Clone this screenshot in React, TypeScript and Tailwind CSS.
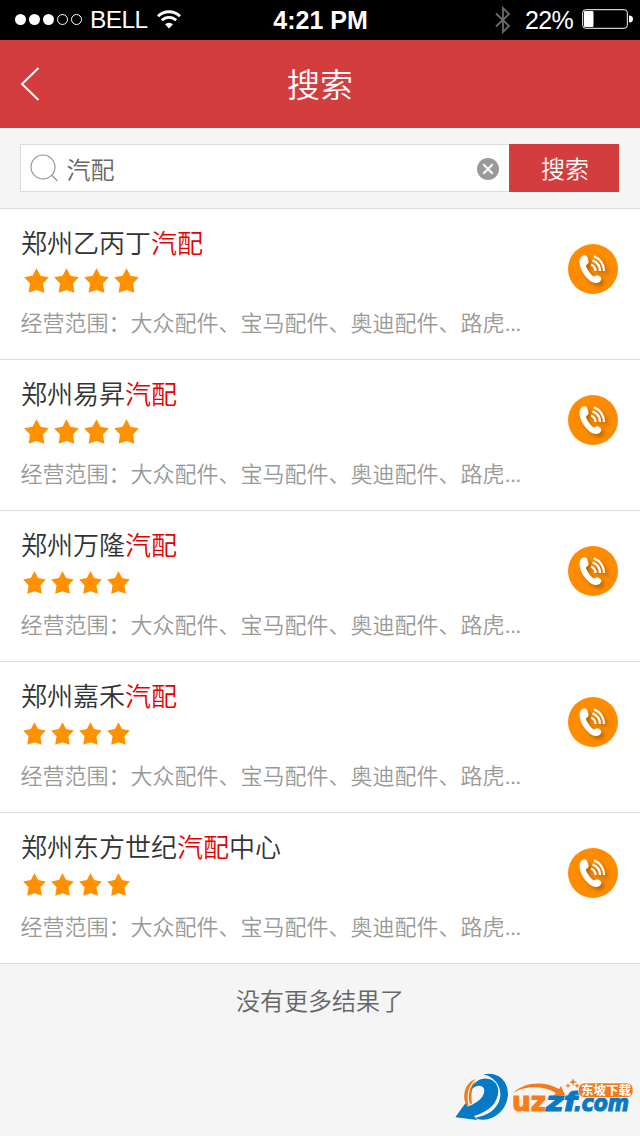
import { clsx } from 'clsx'

const KEYWORD = '汽配'

const SHOPS = [
  { name: '郑州乙丙丁汽配', size: 'lg' },
  { name: '郑州易昇汽配', size: 'lg' },
  { name: '郑州万隆汽配', size: 'sm' },
  { name: '郑州嘉禾汽配', size: 'sm' },
  { name: '郑州东方世纪汽配中心', size: 'sm' },
]

const SCOPE = '经营范围：大众配件、宝马配件、奥迪配件、路虎'

function StatusBar() {
  return (
    <div className="grid h-10 grid-cols-3 items-center bg-black pl-[15px] pr-[7px] font-['Liberation_Sans'] text-white">
      <div className="flex items-center">
        <svg width="68" height="12" viewBox="0 0 68 12">
          {[0, 1, 2].map(i => (
            <circle key={i} cx={5.5 + i * 14} cy="5.5" r="5.5" fill="#fff" />
          ))}
          {[3, 4].map(i => (
            <circle key={i} cx={5.5 + i * 14} cy="5.5" r="5" fill="none" stroke="#fff" />
          ))}
        </svg>
        <span className="ml-[7px] text-[24.5px] leading-10 tracking-[-0.6px]">BELL</span>
        <svg className="mb-[2px] ml-[9px]" width="24" height="19" viewBox="0 0 24 19" fill="none" stroke="#fff" strokeWidth="2.8">
          <path d="M1 6.3a15.6 15.6 0 0 1 22 0" />
          <path d="M4.8 10.3a10.2 10.2 0 0 1 14.4 0" />
          <path d="M12 18.5 8 14.3a5.7 5.7 0 0 1 8 0z" fill="#fff" stroke="none" />
        </svg>
      </div>
      <div className="-ml-[7px] whitespace-nowrap pb-px text-center text-[25px] font-bold leading-[38px]">4:21 PM</div>
      <div className="flex items-center justify-end">
        <svg className="mb-px" width="16" height="28" viewBox="0 0 16 28" fill="none" stroke="#6b6b6b" strokeWidth="1.8">
          <path d="M1 7.5 14 20l-6 6V2l6 6L1 20.5" />
        </svg>
        <span className="ml-[14px] text-[25px] leading-10 tracking-[-0.7px]">22%</span>
        <svg className="mb-[2px] ml-[9px]" width="51" height="20" viewBox="0 0 51 20">
          <rect x="0.7" y="0.7" width="44.6" height="18.6" rx="3" fill="none" stroke="#fff" strokeWidth="1" />
          <rect x="2" y="2" width="9.5" height="16" rx="1" fill="#fff" />
          <path d="M47 6.5a4 3.5 0 0 1 0 7z" fill="#fff" />
        </svg>
      </div>
    </div>
  )
}

function Header() {
  return (
    <header className="grid h-22 grid-cols-3 items-center bg-[#d33d3d] px-5 text-white">
      <svg width="20" height="34" viewBox="0 0 20 34" fill="none" stroke="#fff" strokeWidth="2">
        <path d="M18.5 1 2 17l16.5 16" />
      </svg>
      <h1 className="pt-[4px] text-center text-[33px] leading-[44px]">搜索</h1>
    </header>
  )
}

function SearchBar() {
  return (
    <div className="flex h-20 items-center bg-[#f5f5f5] pl-5 pr-[21px]">
      <div className="flex h-12 flex-1 items-center border border-r-0 border-[#dcdcdc] bg-white pl-[9px] pr-[10px]">
        <svg width="29" height="29" viewBox="0 0 29 29" fill="none" stroke="#909090" strokeWidth="1.1">
          <circle cx="13" cy="13" r="12" />
          <path d="m22 21.5 5.5 5.5" />
        </svg>
        <span className="ml-[7.5px] flex-1 pt-[5px] text-[24px] leading-none text-[#666]">{KEYWORD}</span>
        <svg className="mt-[2px]" width="22" height="22" viewBox="0 0 22 22">
          <circle cx="11" cy="11" r="11" fill="#999" />
          <path d="m6.3 6.3 9.4 9.4m0-9.4-9.4 9.4" stroke="#fff" strokeWidth="2" />
        </svg>
      </div>
      <button className="h-12 w-[110px] bg-[#d33d3d] pl-[2px] pt-[3px] text-[24px] text-white">搜索</button>
    </div>
  )
}

function Star({ large }: { large: boolean }) {
  return (
    <svg className={large ? 'size-[25px]' : 'size-[23px]'} viewBox="0 0 24 24" fill="#ff9000">
      <path d="M12 .3 15.8 7.4l8 1.4-5.6 6 1.4 8.9-7.6-2.6-7.6 2.6 1.4-8.9L.2 8.800l8-1.400z" />
    </svg>
  )
}

function CallButton() {
  return (
    <button className="size-[50px] rounded-full bg-[#ff8c00]">
      <svg width="50" height="50" viewBox="0 0 50 50" fill="none">
        <g className="drop-shadow-[3px_3px_2px_rgba(120,60,0,0.5)]">
          <path
            d="M14 12c2.5-1.6 4.5-.8 5.2 1l1.3 4c.5 2-.5 3-2 3.800-.8.8-.6 1.700 0 2.800 1.800 3.500 3.500 6 6.200 8.200.9.7 1.600.7 2.500.2 1.200-.8 2.500-1 3.800 0l1.500 1c1.500 1.400.8 3.600-1 5-3 2-7 1-10.500-2-5-4.500-8.200-9.500-9.200-15.200-.6-3.600-.3-7 2.200-8.800z"
            fill="#fff"
          />
          <g stroke="#fff" strokeWidth="2.3">
            <path d="M23 20.5a7 7 0 0 1 4.500 6.500" />
            <path d="M24.5 16.3A11.500 11.500 0 0 1 32 27" />
            <path d="M26 12.300A15.500 15.500 0 0 1 36 27" />
          </g>
        </g>
      </svg>
    </button>
  )
}

function ShopRow({ name, size }: { name: string; size: string }) {
  const [before, after] = name.split(KEYWORD)
  const large = size === 'lg'
  return (
    <li className="flex h-[151px] items-start justify-between border-t border-[#dcdcdc] pl-5 pr-[22px]">
      <div>
        <h2 className="mt-[15px] pl-[1px] text-[26px] leading-10 text-[#333]">
          {before}
          <span className="text-[#e60000]">{KEYWORD}</span>
          {after}
        </h2>
        <div className={clsx('flex h-9 items-center pb-[3px]', large ? 'gap-[5.3px] pl-[3.5px]' : 'gap-[5px] pl-[2.5px]')}>
          {[1, 2, 3, 4].map(n => (
            <Star key={n} large={large} />
          ))}
        </div>
        <p className="mt-[6px] pl-[0.5px] text-[22px] leading-9 text-[#999]">
          {SCOPE}
          <span className="tracking-[-0.7px]">...</span>
        </p>
      </div>
      <div className="mt-[35px]">
        <CallButton />
      </div>
    </li>
  )
}

function SiteLogo() {
  return (
    <svg className="overflow-visible" width="190" height="60" viewBox="450 1066 190 60">
      <g className="drop-shadow-[0_0_3px_#fff]" transform="translate(454 1070) scale(.3333)">
        <path d="M40 110C22 84 30 38 66 26 44 46 36 70 44 108z" fill="#f07a1c" />
        <path d="M48 104C40 76 46 50 66 30 54 52 50 72 54 100z" fill="#f07a1c" />
        <path
          d="M50 62C58 34 84 20 108 28c28 10 32 42 14 70-12 18-36 32-62 40l10 12-66-8 30-42 7 10c20-8 41-20 48-38 6-16-2-25-15-25-10 0-18 7-24 15z"
          fill="#0879c4"
        />
        <path d="M88 13c42-8 74 16 74 60-2 46-40 78-78 76-8 0-14-2-20-6 34-4 66-24 74-58 6-32-12-62-50-72z" fill="#0879c4" />
      </g>
      <path d="M513 1093c12-12 33-12 46-4l2-3 4 9-12 1 3-3c-12-7-29-8-43 0z" fill="#f07a1c" />
      <g fontFamily="'DejaVu Sans', sans-serif" fontWeight="700" strokeWidth="1.2">
        <text x="512" y="1111" fontSize="27" textLength="34" lengthAdjust="spacingAndGlyphs" fill="#ff7a14" stroke="#ff7a14">uz</text>
        <text x="546" y="1111" fontSize="27" fontStyle="italic" textLength="31" lengthAdjust="spacingAndGlyphs" fill="#0879c4" stroke="#0879c4">zf</text>
        <text x="574" y="1111" fontSize="23" fontStyle="italic" textLength="55" lengthAdjust="spacingAndGlyphs" fill="#0879c4" stroke="#0879c4">.com</text>
      </g>
      <rect x="578.5" y="1083" width="54.5" height="14.5" rx="6" fill="#f07a1c" stroke="#fff" strokeWidth=".6" />
      <text x="581" y="1095" fontSize="12.5" fontWeight="700" fill="#fff">东坡下载</text>
      <path d="m573 1078 1 3 3 1-3 1-1 3-1-3-3-1 3-1zm-5 5 .7 2 2 .7-2 .7-.7 2-.7-2-2-.7 2-.7zm9 0 .7 2 2 .7-2 .7-.7 2-.7-2-2-.7 2-.7z" fill="#f07a1c" />
    </svg>
  )
}

export default function App() {
  return (
    <div className="flex h-[1136px] w-[640px] flex-col overflow-hidden bg-[#f5f5f5] font-['Liberation_Sans','Noto_Sans_CJK_SC',sans-serif] font-[350]">
      <StatusBar />
      <Header />
      <SearchBar />
      <ul className="border-b border-[#dcdcdc] bg-white">
        {SHOPS.map(shop => (
          <ShopRow key={shop.name} {...shop} />
        ))}
      </ul>
      <p className="mt-[20px] text-center text-[24px] leading-9 text-[#666]">没有更多结果了</p>
      <footer className="mb-[10px] mt-auto flex justify-end">
        <SiteLogo />
      </footer>
    </div>
  )
}
